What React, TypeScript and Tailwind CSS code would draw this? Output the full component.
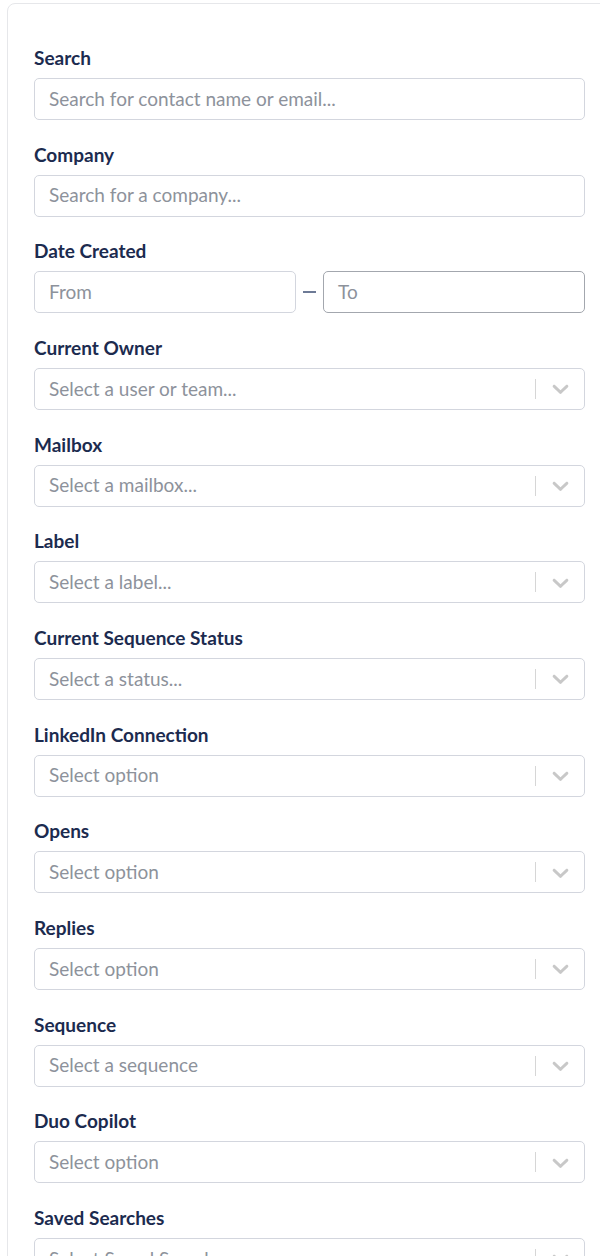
import React from "react";

const Chevron = () => (
  <svg width="27" height="27" viewBox="0 0 20 20" fill="#c8c8c8" aria-hidden="true">
    <path d="M4.516 7.548c0.436-0.446 1.043-0.481 1.576 0l3.908 3.747 3.908-3.747c0.533-0.481 1.141-0.446 1.574 0 0.436 0.445 0.408 1.197 0 1.615-0.406 0.418-4.695 4.502-4.695 4.502-0.217 0.223-0.502 0.335-0.787 0.335s-0.57-0.112-0.789-0.335c0 0-4.287-4.084-4.695-4.502s-0.436-1.17 0-1.615z" />
  </svg>
);

const Label = ({ children }: { children: React.ReactNode }) => (
  <div className="text-[19px] leading-[24px] font-bold text-[#1c2b4f] mb-[8px]">{children}</div>
);

const TextInput = ({ placeholder, dark }: { placeholder: string; dark?: boolean }) => (
  <div
    className={`h-[42px] w-full rounded-[5px] border ${dark ? "border-[#a3a7ae]" : "border-[#d3d6de]"} bg-white px-[14px] flex items-center text-[19px] text-[#8d929b] whitespace-nowrap overflow-hidden`}
  >
    {placeholder}
  </div>
);

const Select = ({ placeholder }: { placeholder: string }) => (
  <div className="h-[42px] w-full rounded-[5px] border border-[#d3d6de] bg-white flex items-center">
    <div className="flex-1 px-[14px] text-[19px] text-[#8d929b] whitespace-nowrap overflow-hidden">{placeholder}</div>
    <div className="w-px h-[20px] bg-[#d6d6d6]" />
    <div className="w-[48px] flex items-center justify-center">
      <Chevron />
    </div>
  </div>
);

const selects: [string, string][] = [
  ["Current Owner", "Select a user or team..."],
  ["Mailbox", "Select a mailbox..."],
  ["Label", "Select a label..."],
  ["Current Sequence Status", "Select a status..."],
  ["LinkedIn Connection", "Select option"],
  ["Opens", "Select option"],
  ["Replies", "Select option"],
  ["Sequence", "Select a sequence"],
  ["Duo Copilot", "Select option"],
  ["Saved Searches", "Select Saved Searches"],
];

export default function App() {
  return (
    <div
      className="w-[600px] h-[1256px] overflow-hidden bg-white"
      style={{ fontFamily: 'Lato, "Noto Sans", sans-serif' }}
    >
      <div className="ml-[7px] mt-[3px] w-[605px] rounded-[8px] border border-[#e6e7ea] pl-[26px] pr-[26px] pt-[42px] pb-[40px] flex flex-col gap-[22.67px]">
        <div>
          <Label>Search</Label>
          <TextInput placeholder="Search for contact name or email..." />
        </div>
        <div>
          <Label>Company</Label>
          <TextInput placeholder="Search for a company..." />
        </div>
        <div>
          <Label>Date Created</Label>
          <div className="flex items-center">
            <div className="flex-1">
              <TextInput placeholder="From" />
            </div>
            <div className="w-[27px] flex items-center justify-center">
              <div className="w-[13px] h-[2px] bg-[#6d7a96]" />
            </div>
            <div className="flex-1">
              <TextInput placeholder="To" dark />
            </div>
          </div>
        </div>
        {selects.map(([l, p]) => (
          <div key={l}>
            <Label>{l}</Label>
            <Select placeholder={p} />
          </div>
        ))}
      </div>
    </div>
  );
}
